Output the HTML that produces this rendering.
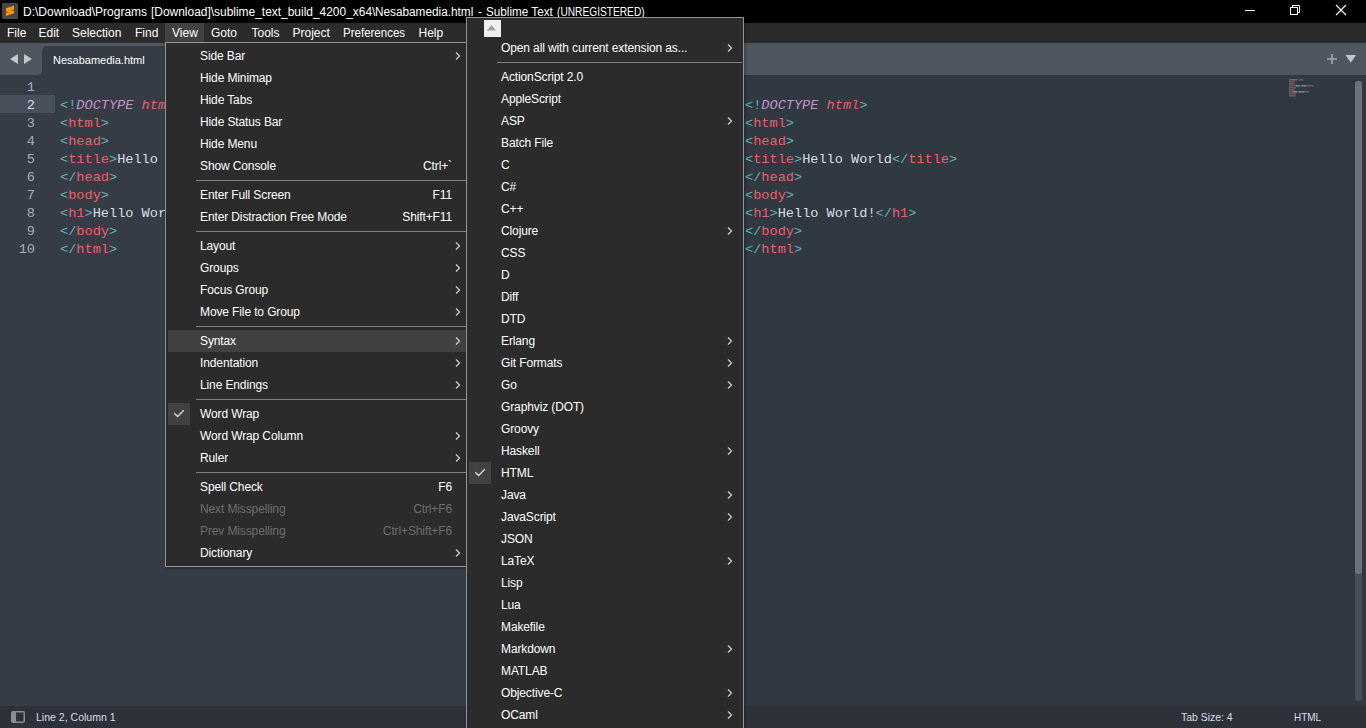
<!DOCTYPE html>
<html><head><meta charset="utf-8">
<style>
*{margin:0;padding:0;box-sizing:border-box}
html,body{width:1366px;height:728px;overflow:hidden;background:#303841;font-family:"Liberation Sans",sans-serif;font-size:12px;color:#fff}
.abs{position:absolute}
#title{left:0;top:0;width:1366px;height:23px;background:#000}
#title .t{top:5px;white-space:pre;line-height:15px}
.sx{transform-origin:0 0}
#menubar{left:0;top:23px;width:1366px;height:20px;background:#2b2b2b}
#menubar span{position:absolute;top:3px;line-height:15px;white-space:pre}
#tabbar{left:0;top:43px;width:1366px;height:32px;background:#4f5660}
#notch{left:30px;top:60px;width:20px;height:15px;background:#363c46}
#nav{left:0;top:43px;width:42px;height:32px;background:#4f5660;border-bottom-right-radius:5px}
#tab{left:42px;top:46px;width:200px;height:29px;background:#363c46;border-top-left-radius:5px}
#tab span{position:absolute;left:11px;top:7px;line-height:15px;color:#fff;font-size:11px}
#editor{left:0;top:75px;width:1366px;height:631px;background:#303841}
#status{left:0;top:706px;width:1366px;height:22px;background:#2e313a;color:#d8dee9;font-size:11px}
#status span{position:absolute;top:4px;line-height:15px;white-space:pre}
.code{position:absolute;font-family:"Liberation Mono",monospace;font-size:13.6px;line-height:18px;white-space:pre}
.ln{color:#a6acb9;text-align:right}
.p{color:#5fb4b4}.tg{color:#ec5f66}.dt{color:#c695c6;font-style:italic}.at{color:#ec5f66;font-style:italic}.tx{color:#d8dee9}
.menu{position:absolute;background:#2b2b2b;border:1px solid #959595;overflow:hidden;box-shadow:1px 1px 3px rgba(0,0,0,0.3)}
.mi{position:absolute;left:0;height:22px;width:100%;white-space:pre}
.mi .l{position:absolute;top:4px;line-height:15px;letter-spacing:-0.12px}
.mi .r{position:absolute;top:4px;line-height:15px;text-align:right;letter-spacing:-0.12px}
.mi .ar{position:absolute;top:6px;line-height:0}
.hl{position:absolute;background:#414141}
.chkbox{position:absolute;left:2px;top:0;width:22px;height:22px;background:#414141}
.chkbox svg{position:absolute;left:0;top:0}
.sep{position:absolute;height:1px;background:#818181}
.dis{color:#6d6d6d}
.scrollup{position:absolute;left:17px;top:2px;width:17px;height:17px;background:#f0f0f0}
.scrollup svg{position:absolute;left:0;top:0}
svg{display:block}
</style></head><body>
<div id="title" class="abs">
  <svg class="abs" style="left:0;top:0" width="22" height="22" viewBox="0 0 22 22">
    <rect x="2" y="3" width="16" height="16" rx="1.5" fill="#474747"/>
    <path d="M6 8.2 L14 5.8 L14 9.5 L10.3 10.2 L14 10.7 L14 13.3 L6 16 L6 12.8 L10 12 L6 11.4 Z" fill="#ff9a00"/>
  </svg>
  <div class="abs t" style="left:23px">D:\Download\Programs</div><div class="abs t sx" style="left:151px;transform:scaleX(0.995)">[Download]\sublime_text_build_4200_x64\</div><div class="abs t sx" style="left:375px;transform:scaleX(0.982)">Nesabamedia.html</div><div class="abs t" style="left:478px">-</div><div class="abs t sx" style="left:486px;transform:scaleX(0.975)">Sublime Text</div><div class="abs t sx" style="left:556.5px;transform:scaleX(0.848)">(UNREGISTERED)</div>
  <svg class="abs" style="left:1230px;top:0" width="136" height="23" viewBox="1230 0 136 23">
    <path d="M1245 10.5 H1255" stroke="#fff" stroke-width="1"/>
    <rect x="1290.5" y="7.5" width="7" height="7" stroke="#fff" stroke-width="1" fill="none"/>
    <path d="M1292.5 7 V5.5 H1299.5 V12.5 H1298" stroke="#fff" stroke-width="1" fill="none"/>
    <path d="M1336 5 L1346 15 M1346 5 L1336 15" stroke="#fff" stroke-width="1.1"/>
  </svg>
</div>
<div id="menubar" class="abs">
  <div class="abs" style="left:165px;top:0;width:39px;height:19px;background:#414141"></div>
  <span style="left:7px">File</span><span style="left:38.5px">Edit</span><span style="left:72px">Selection</span><span style="left:135px">Find</span><span style="left:172px">View</span><span style="left:211px">Goto</span><span style="left:251.5px">Tools</span><span style="left:292.5px">Project</span><span class="sx" style="left:343px;transform:scaleX(0.96)">Preferences</span><span style="left:418.5px">Help</span>
</div>
<div id="tabbar" class="abs"></div>
<div id="notch" class="abs"></div>
<div id="nav" class="abs">
  <svg class="abs" style="left:0;top:0" width="42" height="32" viewBox="0 43 42 32">
    <path d="M10 59 L18 54 L18 64 Z" fill="#c3c7cb"/>
    <path d="M24 54 L32 59 L24 64 Z" fill="#c3c7cb"/>
  </svg>
</div>
<div id="tab" class="abs"><span>Nesabamedia.html</span></div>
<svg class="abs" style="left:1320px;top:43px" width="46" height="32" viewBox="1320 43 46 32">
  <path d="M1327 59 H1337 M1332 54 V64" stroke="#a3a8ae" stroke-width="1.6"/>
  <path d="M1345.5 55 L1356 55 L1350.75 62.7 Z" fill="#c3c7cb"/>
</svg>
<div id="editor" class="abs">
  <div class="abs" style="left:0;top:0;width:466px;height:631px;background:#363c46"></div>
  <div class="abs" style="left:0;top:20px;width:55px;height:18px;background:#47505a"></div>
  <div class="code ln" style="left:0;top:4px;width:35px">1
<span style="color:#d8dee9">2</span>
3
4
5
6
7
8
9
10</div>
  <div class="code" style="left:60px;top:4px">
<span class="p">&lt;!</span><span class="dt">DOCTYPE</span> <span class="at">html</span><span class="p">&gt;</span>
<span class="p">&lt;</span><span class="tg">html</span><span class="p">&gt;</span>
<span class="p">&lt;</span><span class="tg">head</span><span class="p">&gt;</span>
<span class="p">&lt;</span><span class="tg">title</span><span class="p">&gt;</span><span class="tx">Hello World</span><span class="p">&lt;/</span><span class="tg">title</span><span class="p">&gt;</span>
<span class="p">&lt;/</span><span class="tg">head</span><span class="p">&gt;</span>
<span class="p">&lt;</span><span class="tg">body</span><span class="p">&gt;</span>
<span class="p">&lt;</span><span class="tg">h1</span><span class="p">&gt;</span><span class="tx">Hello World!</span><span class="p">&lt;/</span><span class="tg">h1</span><span class="p">&gt;</span>
<span class="p">&lt;/</span><span class="tg">body</span><span class="p">&gt;</span>
<span class="p">&lt;/</span><span class="tg">html</span><span class="p">&gt;</span></div>
  <div class="code" style="left:745px;top:4px">
<span class="p">&lt;!</span><span class="dt">DOCTYPE</span> <span class="at">html</span><span class="p">&gt;</span>
<span class="p">&lt;</span><span class="tg">html</span><span class="p">&gt;</span>
<span class="p">&lt;</span><span class="tg">head</span><span class="p">&gt;</span>
<span class="p">&lt;</span><span class="tg">title</span><span class="p">&gt;</span><span class="tx">Hello World</span><span class="p">&lt;/</span><span class="tg">title</span><span class="p">&gt;</span>
<span class="p">&lt;/</span><span class="tg">head</span><span class="p">&gt;</span>
<span class="p">&lt;</span><span class="tg">body</span><span class="p">&gt;</span>
<span class="p">&lt;</span><span class="tg">h1</span><span class="p">&gt;</span><span class="tx">Hello World!</span><span class="p">&lt;/</span><span class="tg">h1</span><span class="p">&gt;</span>
<span class="p">&lt;/</span><span class="tg">body</span><span class="p">&gt;</span>
<span class="p">&lt;/</span><span class="tg">html</span><span class="p">&gt;</span></div>
  <svg class="abs" style="left:1280px;top:0" width="60" height="30" viewBox="1280 0 60 30"><rect x="1289.00" y="4" width="1.90" height="1.6" fill="#5fb4b4" opacity="0.45"/><rect x="1290.90" y="4" width="6.65" height="1.6" fill="#c695c6" opacity="0.45"/><rect x="1298.50" y="4" width="3.80" height="1.6" fill="#ec5f66" opacity="0.45"/><rect x="1302.30" y="4" width="0.95" height="1.6" fill="#5fb4b4" opacity="0.45"/><rect x="1289.00" y="6" width="0.95" height="1.6" fill="#5fb4b4" opacity="0.45"/><rect x="1289.95" y="6" width="3.80" height="1.6" fill="#ec5f66" opacity="0.45"/><rect x="1293.75" y="6" width="0.95" height="1.6" fill="#5fb4b4" opacity="0.45"/><rect x="1289.00" y="8" width="0.95" height="1.6" fill="#5fb4b4" opacity="0.45"/><rect x="1289.95" y="8" width="3.80" height="1.6" fill="#ec5f66" opacity="0.45"/><rect x="1293.75" y="8" width="0.95" height="1.6" fill="#5fb4b4" opacity="0.45"/><rect x="1289.00" y="10" width="0.95" height="1.6" fill="#5fb4b4" opacity="0.45"/><rect x="1289.95" y="10" width="4.75" height="1.6" fill="#ec5f66" opacity="0.45"/><rect x="1294.70" y="10" width="0.95" height="1.6" fill="#5fb4b4" opacity="0.45"/><rect x="1295.65" y="10" width="4.75" height="1.6" fill="#d8dee9" opacity="0.45"/><rect x="1301.35" y="10" width="4.75" height="1.6" fill="#d8dee9" opacity="0.45"/><rect x="1306.10" y="10" width="1.90" height="1.6" fill="#5fb4b4" opacity="0.45"/><rect x="1308.00" y="10" width="4.75" height="1.6" fill="#ec5f66" opacity="0.45"/><rect x="1312.75" y="10" width="0.95" height="1.6" fill="#5fb4b4" opacity="0.45"/><rect x="1289.00" y="12" width="1.90" height="1.6" fill="#5fb4b4" opacity="0.45"/><rect x="1290.90" y="12" width="3.80" height="1.6" fill="#ec5f66" opacity="0.45"/><rect x="1294.70" y="12" width="0.95" height="1.6" fill="#5fb4b4" opacity="0.45"/><rect x="1289.00" y="14" width="0.95" height="1.6" fill="#5fb4b4" opacity="0.45"/><rect x="1289.95" y="14" width="3.80" height="1.6" fill="#ec5f66" opacity="0.45"/><rect x="1293.75" y="14" width="0.95" height="1.6" fill="#5fb4b4" opacity="0.45"/><rect x="1289.00" y="16" width="0.95" height="1.6" fill="#5fb4b4" opacity="0.45"/><rect x="1289.95" y="16" width="1.90" height="1.6" fill="#ec5f66" opacity="0.45"/><rect x="1291.85" y="16" width="0.95" height="1.6" fill="#5fb4b4" opacity="0.45"/><rect x="1292.80" y="16" width="4.75" height="1.6" fill="#d8dee9" opacity="0.45"/><rect x="1298.50" y="16" width="5.70" height="1.6" fill="#d8dee9" opacity="0.45"/><rect x="1304.20" y="16" width="1.90" height="1.6" fill="#5fb4b4" opacity="0.45"/><rect x="1306.10" y="16" width="1.90" height="1.6" fill="#ec5f66" opacity="0.45"/><rect x="1308.00" y="16" width="0.95" height="1.6" fill="#5fb4b4" opacity="0.45"/><rect x="1289.00" y="18" width="1.90" height="1.6" fill="#5fb4b4" opacity="0.45"/><rect x="1290.90" y="18" width="3.80" height="1.6" fill="#ec5f66" opacity="0.45"/><rect x="1294.70" y="18" width="0.95" height="1.6" fill="#5fb4b4" opacity="0.45"/><rect x="1289.00" y="20" width="1.90" height="1.6" fill="#5fb4b4" opacity="0.45"/><rect x="1290.90" y="20" width="3.80" height="1.6" fill="#ec5f66" opacity="0.45"/><rect x="1294.70" y="20" width="0.95" height="1.6" fill="#5fb4b4" opacity="0.45"/></svg>
  <div class="abs" style="left:1355px;top:6px;width:7px;height:620px;background:#464d56;border-radius:3px"></div>
  <div class="abs" style="left:1355px;top:6px;width:7px;height:493px;background:#6c717a;border-radius:3px"></div>
</div>
<div id="status" class="abs">
  <svg class="abs" style="left:0;top:0" width="30" height="22" viewBox="0 706 30 22">
    <rect x="11" y="711" width="14" height="12" rx="2" fill="#8a8e94"/>
    <rect x="16" y="712.5" width="7.5" height="9" fill="#2e313a"/>
  </svg>
  <span class="sx" style="left:36px;transform:scaleX(0.957)">Line 2, Column 1</span>
  <span class="sx" style="left:1181px;transform:scaleX(0.948)">Tab Size: 4</span>
  <span class="sx" style="left:1294px;transform:scaleX(0.906)">HTML</span>
</div>
<div class="menu" style="left:165px;top:42px;width:302px;height:525px">
<div class="mi" style="top:2px"><span class="l" style="left:34px">Side Bar</span><span class="ar" style="left:289px"><svg class="arr" width="6" height="10" viewBox="0 0 6 10"><path d="M1 1.5 L4.5 5 L1 8.5" stroke="#d0d0d0" stroke-width="1.2" fill="none"/></svg></span></div>
<div class="mi" style="top:24px"><span class="l" style="left:34px">Hide Minimap</span></div>
<div class="mi" style="top:46px"><span class="l" style="left:34px">Hide Tabs</span></div>
<div class="mi" style="top:68px"><span class="l" style="left:34px">Hide Status Bar</span></div>
<div class="mi" style="top:90px"><span class="l" style="left:34px">Hide Menu</span></div>
<div class="mi" style="top:112px"><span class="l" style="left:34px">Show Console</span><span class="r" style="right:14px">Ctrl+`</span></div>
<div class="sep" style="top:137px;left:30px;width:270px"></div>
<div class="mi" style="top:141px"><span class="l" style="left:34px">Enter Full Screen</span><span class="r" style="right:14px">F11</span></div>
<div class="mi" style="top:163px"><span class="l" style="left:34px">Enter Distraction Free Mode</span><span class="r" style="right:14px">Shift+F11</span></div>
<div class="sep" style="top:188px;left:30px;width:270px"></div>
<div class="mi" style="top:192px"><span class="l" style="left:34px">Layout</span><span class="ar" style="left:289px"><svg class="arr" width="6" height="10" viewBox="0 0 6 10"><path d="M1 1.5 L4.5 5 L1 8.5" stroke="#d0d0d0" stroke-width="1.2" fill="none"/></svg></span></div>
<div class="mi" style="top:214px"><span class="l" style="left:34px">Groups</span><span class="ar" style="left:289px"><svg class="arr" width="6" height="10" viewBox="0 0 6 10"><path d="M1 1.5 L4.5 5 L1 8.5" stroke="#d0d0d0" stroke-width="1.2" fill="none"/></svg></span></div>
<div class="mi" style="top:236px"><span class="l" style="left:34px">Focus Group</span><span class="ar" style="left:289px"><svg class="arr" width="6" height="10" viewBox="0 0 6 10"><path d="M1 1.5 L4.5 5 L1 8.5" stroke="#d0d0d0" stroke-width="1.2" fill="none"/></svg></span></div>
<div class="mi" style="top:258px"><span class="l" style="left:34px">Move File to Group</span><span class="ar" style="left:289px"><svg class="arr" width="6" height="10" viewBox="0 0 6 10"><path d="M1 1.5 L4.5 5 L1 8.5" stroke="#d0d0d0" stroke-width="1.2" fill="none"/></svg></span></div>
<div class="sep" style="top:283px;left:30px;width:270px"></div>
<div class="mi" style="top:287px"><div class="hl" style="left:2px;top:0;width:298px;height:22px"></div><span class="l" style="left:34px">Syntax</span><span class="ar" style="left:289px"><svg class="arr" width="6" height="10" viewBox="0 0 6 10"><path d="M1 1.5 L4.5 5 L1 8.5" stroke="#d0d0d0" stroke-width="1.2" fill="none"/></svg></span></div>
<div class="mi" style="top:309px"><span class="l" style="left:34px">Indentation</span><span class="ar" style="left:289px"><svg class="arr" width="6" height="10" viewBox="0 0 6 10"><path d="M1 1.5 L4.5 5 L1 8.5" stroke="#d0d0d0" stroke-width="1.2" fill="none"/></svg></span></div>
<div class="mi" style="top:331px"><span class="l" style="left:34px">Line Endings</span><span class="ar" style="left:289px"><svg class="arr" width="6" height="10" viewBox="0 0 6 10"><path d="M1 1.5 L4.5 5 L1 8.5" stroke="#d0d0d0" stroke-width="1.2" fill="none"/></svg></span></div>
<div class="sep" style="top:356px;left:30px;width:270px"></div>
<div class="mi" style="top:360px"><div class="chkbox"><svg width="22" height="22" viewBox="0 0 22 22"><path d="M6.3 10.2 L9.6 13.4 L15.8 7.3" stroke="#d6d6d6" stroke-width="1.4" fill="none"/></svg></div><span class="l" style="left:34px">Word Wrap</span></div>
<div class="mi" style="top:382px"><span class="l" style="left:34px">Word Wrap Column</span><span class="ar" style="left:289px"><svg class="arr" width="6" height="10" viewBox="0 0 6 10"><path d="M1 1.5 L4.5 5 L1 8.5" stroke="#d0d0d0" stroke-width="1.2" fill="none"/></svg></span></div>
<div class="mi" style="top:404px"><span class="l" style="left:34px">Ruler</span><span class="ar" style="left:289px"><svg class="arr" width="6" height="10" viewBox="0 0 6 10"><path d="M1 1.5 L4.5 5 L1 8.5" stroke="#d0d0d0" stroke-width="1.2" fill="none"/></svg></span></div>
<div class="sep" style="top:429px;left:30px;width:270px"></div>
<div class="mi" style="top:433px"><span class="l" style="left:34px">Spell Check</span><span class="r" style="right:14px">F6</span></div>
<div class="mi dis" style="top:455px"><span class="l" style="left:34px">Next Misspelling</span><span class="r" style="right:14px">Ctrl+F6</span></div>
<div class="mi dis" style="top:477px"><span class="l" style="left:34px">Prev Misspelling</span><span class="r" style="right:14px">Ctrl+Shift+F6</span></div>
<div class="mi" style="top:499px"><span class="l" style="left:34px">Dictionary</span><span class="ar" style="left:289px"><svg class="arr" width="6" height="10" viewBox="0 0 6 10"><path d="M1 1.5 L4.5 5 L1 8.5" stroke="#d0d0d0" stroke-width="1.2" fill="none"/></svg></span></div>
</div>
<div class="menu" style="left:466px;top:17px;width:278px;height:720px">
<div class="scrollup"><svg width="17" height="17" viewBox="0 0 17 17"><path d="M3 10.5 L7.5 5 L12 10.5 Z" fill="#a0a0a0"/></svg></div>
<div class="mi" style="top:19px"><span class="l" style="left:34px">Open all with current extension as...</span><span class="ar" style="left:260px"><svg class="arr" width="6" height="10" viewBox="0 0 6 10"><path d="M1 1.5 L4.5 5 L1 8.5" stroke="#d0d0d0" stroke-width="1.2" fill="none"/></svg></span></div>
<div class="sep" style="top:44px;left:30px;width:245px"></div>
<div class="mi" style="top:48px"><span class="l" style="left:34px">ActionScript 2.0</span></div>
<div class="mi" style="top:70px"><span class="l" style="left:34px">AppleScript</span></div>
<div class="mi" style="top:92px"><span class="l" style="left:34px">ASP</span><span class="ar" style="left:260px"><svg class="arr" width="6" height="10" viewBox="0 0 6 10"><path d="M1 1.5 L4.5 5 L1 8.5" stroke="#d0d0d0" stroke-width="1.2" fill="none"/></svg></span></div>
<div class="mi" style="top:114px"><span class="l" style="left:34px">Batch File</span></div>
<div class="mi" style="top:136px"><span class="l" style="left:34px">C</span></div>
<div class="mi" style="top:158px"><span class="l" style="left:34px">C#</span></div>
<div class="mi" style="top:180px"><span class="l" style="left:34px">C++</span></div>
<div class="mi" style="top:202px"><span class="l" style="left:34px">Clojure</span><span class="ar" style="left:260px"><svg class="arr" width="6" height="10" viewBox="0 0 6 10"><path d="M1 1.5 L4.5 5 L1 8.5" stroke="#d0d0d0" stroke-width="1.2" fill="none"/></svg></span></div>
<div class="mi" style="top:224px"><span class="l" style="left:34px">CSS</span></div>
<div class="mi" style="top:246px"><span class="l" style="left:34px">D</span></div>
<div class="mi" style="top:268px"><span class="l" style="left:34px">Diff</span></div>
<div class="mi" style="top:290px"><span class="l" style="left:34px">DTD</span></div>
<div class="mi" style="top:312px"><span class="l" style="left:34px">Erlang</span><span class="ar" style="left:260px"><svg class="arr" width="6" height="10" viewBox="0 0 6 10"><path d="M1 1.5 L4.5 5 L1 8.5" stroke="#d0d0d0" stroke-width="1.2" fill="none"/></svg></span></div>
<div class="mi" style="top:334px"><span class="l" style="left:34px">Git Formats</span><span class="ar" style="left:260px"><svg class="arr" width="6" height="10" viewBox="0 0 6 10"><path d="M1 1.5 L4.5 5 L1 8.5" stroke="#d0d0d0" stroke-width="1.2" fill="none"/></svg></span></div>
<div class="mi" style="top:356px"><span class="l" style="left:34px">Go</span><span class="ar" style="left:260px"><svg class="arr" width="6" height="10" viewBox="0 0 6 10"><path d="M1 1.5 L4.5 5 L1 8.5" stroke="#d0d0d0" stroke-width="1.2" fill="none"/></svg></span></div>
<div class="mi" style="top:378px"><span class="l" style="left:34px">Graphviz (DOT)</span></div>
<div class="mi" style="top:400px"><span class="l" style="left:34px">Groovy</span></div>
<div class="mi" style="top:422px"><span class="l" style="left:34px">Haskell</span><span class="ar" style="left:260px"><svg class="arr" width="6" height="10" viewBox="0 0 6 10"><path d="M1 1.5 L4.5 5 L1 8.5" stroke="#d0d0d0" stroke-width="1.2" fill="none"/></svg></span></div>
<div class="mi" style="top:444px"><div class="chkbox"><svg width="22" height="22" viewBox="0 0 22 22"><path d="M6.3 10.2 L9.6 13.4 L15.8 7.3" stroke="#d6d6d6" stroke-width="1.4" fill="none"/></svg></div><span class="l" style="left:34px">HTML</span></div>
<div class="mi" style="top:466px"><span class="l" style="left:34px">Java</span><span class="ar" style="left:260px"><svg class="arr" width="6" height="10" viewBox="0 0 6 10"><path d="M1 1.5 L4.5 5 L1 8.5" stroke="#d0d0d0" stroke-width="1.2" fill="none"/></svg></span></div>
<div class="mi" style="top:488px"><span class="l" style="left:34px">JavaScript</span><span class="ar" style="left:260px"><svg class="arr" width="6" height="10" viewBox="0 0 6 10"><path d="M1 1.5 L4.5 5 L1 8.5" stroke="#d0d0d0" stroke-width="1.2" fill="none"/></svg></span></div>
<div class="mi" style="top:510px"><span class="l" style="left:34px">JSON</span></div>
<div class="mi" style="top:532px"><span class="l" style="left:34px">LaTeX</span><span class="ar" style="left:260px"><svg class="arr" width="6" height="10" viewBox="0 0 6 10"><path d="M1 1.5 L4.5 5 L1 8.5" stroke="#d0d0d0" stroke-width="1.2" fill="none"/></svg></span></div>
<div class="mi" style="top:554px"><span class="l" style="left:34px">Lisp</span></div>
<div class="mi" style="top:576px"><span class="l" style="left:34px">Lua</span></div>
<div class="mi" style="top:598px"><span class="l" style="left:34px">Makefile</span></div>
<div class="mi" style="top:620px"><span class="l" style="left:34px">Markdown</span><span class="ar" style="left:260px"><svg class="arr" width="6" height="10" viewBox="0 0 6 10"><path d="M1 1.5 L4.5 5 L1 8.5" stroke="#d0d0d0" stroke-width="1.2" fill="none"/></svg></span></div>
<div class="mi" style="top:642px"><span class="l" style="left:34px">MATLAB</span></div>
<div class="mi" style="top:664px"><span class="l" style="left:34px">Objective-C</span><span class="ar" style="left:260px"><svg class="arr" width="6" height="10" viewBox="0 0 6 10"><path d="M1 1.5 L4.5 5 L1 8.5" stroke="#d0d0d0" stroke-width="1.2" fill="none"/></svg></span></div>
<div class="mi" style="top:686px"><span class="l" style="left:34px">OCaml</span><span class="ar" style="left:260px"><svg class="arr" width="6" height="10" viewBox="0 0 6 10"><path d="M1 1.5 L4.5 5 L1 8.5" stroke="#d0d0d0" stroke-width="1.2" fill="none"/></svg></span></div>
</div>
</body></html>
